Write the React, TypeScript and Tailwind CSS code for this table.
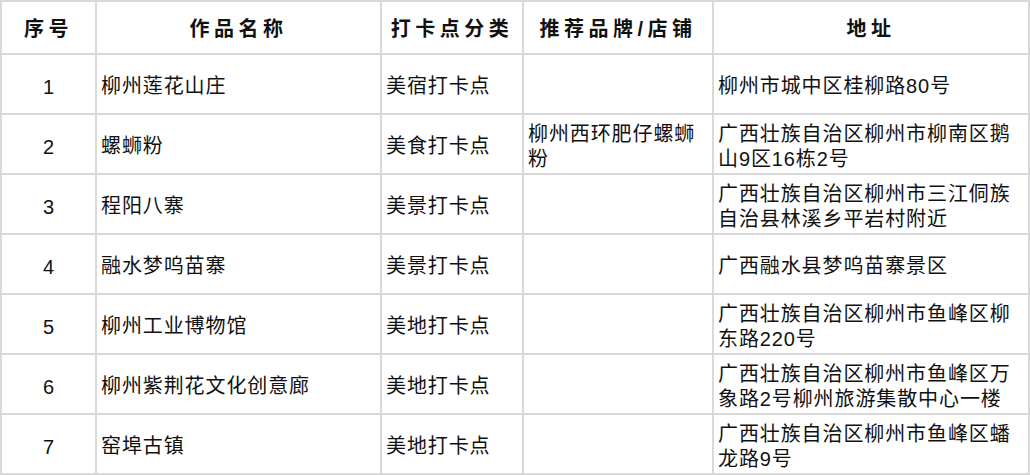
import React from "react";

const rows = [
  ["1", "柳州莲花山庄", "美宿打卡点", "", "柳州市城中区桂柳路80号"],
  ["2", "螺蛳粉", "美食打卡点", "柳州西环肥仔螺蛳粉", "广西壮族自治区柳州市柳南区鹅山9区16栋2号"],
  ["3", "程阳八寨", "美景打卡点", "", "广西壮族自治区柳州市三江侗族自治县林溪乡平岩村附近"],
  ["4", "融水梦呜苗寨", "美景打卡点", "", "广西融水县梦呜苗寨景区"],
  ["5", "柳州工业博物馆", "美地打卡点", "", "广西壮族自治区柳州市鱼峰区柳东路220号"],
  ["6", "柳州紫荆花文化创意廊", "美地打卡点", "", "广西壮族自治区柳州市鱼峰区万象路2号柳州旅游集散中心一楼"],
  ["7", "窑埠古镇", "美地打卡点", "", "广西壮族自治区柳州市鱼峰区蟠龙路9号"],
];

const headers = ["序号", "作品名称", "打卡点分类", "推荐品牌/店铺", "地址"];

export default function App() {
  return (
    <div
      className="w-[1030px] h-[475px] bg-[#d9d9d9] p-[2px] grid grid-cols-[93px_283px_140px_188px_314px] grid-rows-[51px_repeat(7,58px)] gap-[2px] overflow-hidden"
      style={{ fontFamily: '"Liberation Sans", "Noto Sans CJK SC", sans-serif' }}
    >
      {headers.map((h, i) => (
        <div
          key={h}
          className={`bg-white flex items-center justify-center pt-[3px] text-[20px] font-bold tracking-[4.5px] text-[#111] whitespace-nowrap overflow-visible ${i === 3 ? "relative z-10" : ""}`}
        >
          {h}
        </div>
      ))}
      {rows.map((r) => (
        <React.Fragment key={r[0]}>
          <div className="bg-white flex items-center justify-center text-[20px] text-[#111] pt-[5px]">
            {r[0]}
          </div>
          {r.slice(1).map((c, j) => (
            <div
              key={j}
              className="bg-white flex items-center pl-[4px] pr-[2px] pt-[5px] text-[20px] leading-[25px] tracking-[0.9px] text-[#111] break-all"
            >
              <span>{c}</span>
            </div>
          ))}
        </React.Fragment>
      ))}
    </div>
  );
}
